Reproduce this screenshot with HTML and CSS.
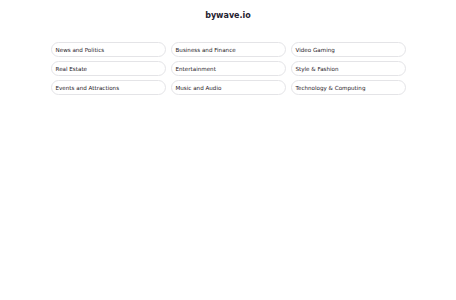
FILE: index.html
```html
<!DOCTYPE html>
<html>
<head>
<meta charset="utf-8">
<link rel="stylesheet" href="styles.css">
</head>
<body>
<header class="top"><h1 class="brand">bywave.io</h1></header>
<main class="grid">
  <a class="pill">News and Politics</a>
  <a class="pill">Business and Finance</a>
  <a class="pill">Video Gaming</a>
  <a class="pill">Real Estate</a>
  <a class="pill">Entertainment</a>
  <a class="pill">Style &amp; Fashion</a>
  <a class="pill">Events and Attractions</a>
  <a class="pill">Music and Audio</a>
  <a class="pill">Technology &amp; Computing</a>
</main>
</body>
</html>
```
FILE: styles.css
```css
html, body { margin: 0; padding: 0; background: #fff; }
body { font-family: "DejaVu Sans", sans-serif; color: #1f2128; }
.top { display: flex; justify-content: center; padding-top: 10px; }
.brand { margin: 0; font-size: 8px; font-weight: 700; line-height: 11px; color: #1f2230; }
.grid {
  width: 355px; margin: 21px auto 0;
  display: grid; grid-template-columns: repeat(3, 1fr); column-gap: 5px; row-gap: 4px;
}
.pill {
  display: flex; align-items: center; height: 15px; box-sizing: border-box;
  border: 1px solid #e4e4e7; border-radius: 999px; padding: 0 4px;
  font-size: 5.6px; color: #1f2128;
}
```
